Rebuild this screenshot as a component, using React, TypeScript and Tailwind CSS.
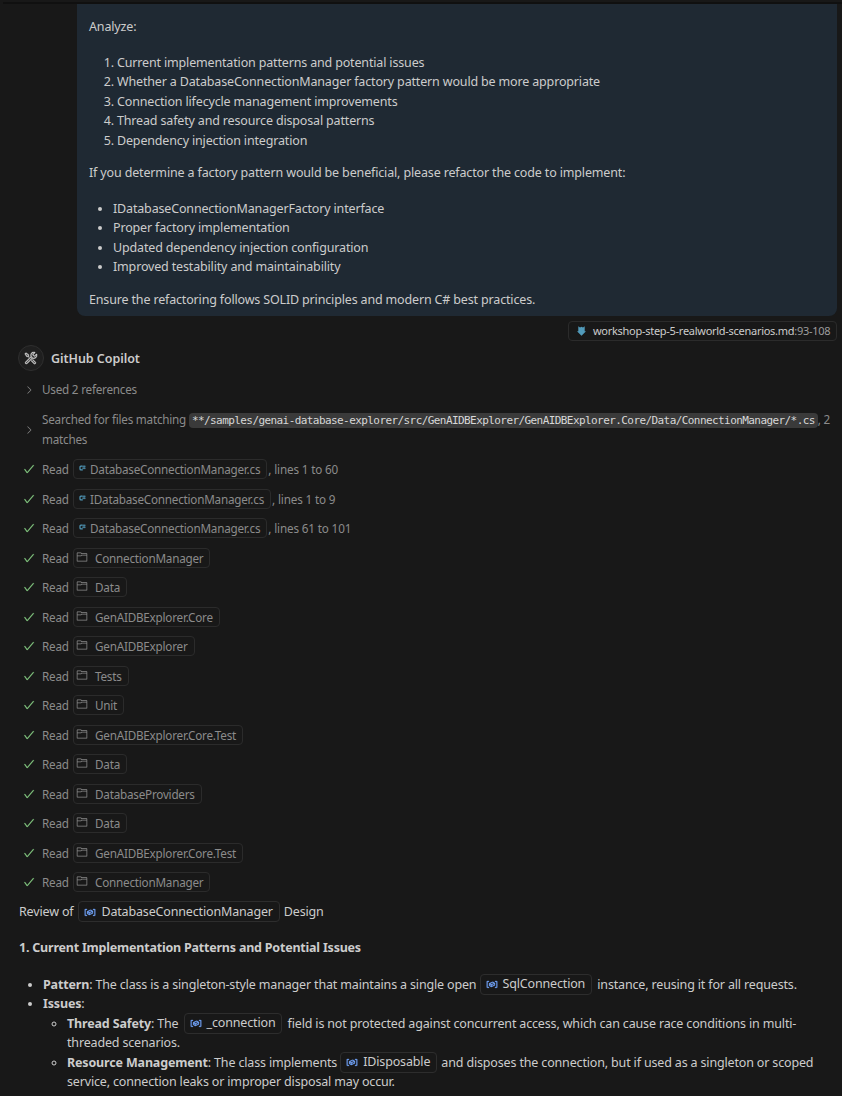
import React from "react";
import {
  VscTools,
  VscChevronRight,
  VscCheck,
  VscFolder,
  VscSymbolVariable,
} from "react-icons/vsc";

const analysisSteps = [
  "Current implementation patterns and potential issues",
  "Whether a DatabaseConnectionManager factory pattern would be more appropriate",
  "Connection lifecycle management improvements",
  "Thread safety and resource disposal patterns",
  "Dependency injection integration",
];

const factoryGoals = [
  "IDatabaseConnectionManagerFactory interface",
  "Proper factory implementation",
  "Updated dependency injection configuration",
  "Improved testability and maintainability",
];

const reads: { name: string; lines?: string }[] = [
  { name: "DatabaseConnectionManager.cs", lines: "lines 1 to 60" },
  { name: "IDatabaseConnectionManager.cs", lines: "lines 1 to 9" },
  { name: "DatabaseConnectionManager.cs", lines: "lines 61 to 101" },
  { name: "ConnectionManager" },
  { name: "Data" },
  { name: "GenAIDBExplorer.Core" },
  { name: "GenAIDBExplorer" },
  { name: "Tests" },
  { name: "Unit" },
  { name: "GenAIDBExplorer.Core.Test" },
  { name: "Data" },
  { name: "DatabaseProviders" },
  { name: "Data" },
  { name: "GenAIDBExplorer.Core.Test" },
  { name: "ConnectionManager" },
];

function CSharpIcon() {
  return (
    <svg viewBox="0 0 7 6" className="h-[6px] w-[7px] shrink-0" fill="none" stroke="#519aba">
      <path d="M3.4 1.2H1.9Q1 1.2 1 2.1v1.8q0 .9.9.9h1.9" strokeWidth="1.2" />
      <path d="M4.2.5v3.7M5.7.5v3.7M3.3 1.3h3.3M3.3 3.3h3.3" strokeWidth=".7" />
    </svg>
  );
}

function MarkdownIcon() {
  return (
    <svg viewBox="0 0 9 10" className="h-[10px] w-[9px] shrink-0" fill="#519aba">
      <path d="M1.3.2 3 1.6 4.5.8 6 1.6 7.7.2V5.3H9L4.5 9.8 0 5.3h1.3z" />
    </svg>
  );
}

function SymbolChip({ children, className = "mx-px mb-[-2px]" }: { children: string; className?: string }) {
  return (
    <span className={`-mt-1 inline-flex h-[21px] items-center rounded border border-[#2d2d2d] pl-[5px] pr-[6px] align-middle ${className}`}>
      <VscSymbolVariable className="mr-[5px] h-3 w-3 shrink-0 stroke-[#75a8ff] stroke-[0.4] text-[#75a8ff]" />
      <span>{children}</span>
    </span>
  );
}

function ReadRow({ name, lines }: { name: string; lines?: string }) {
  return (
    <div className="flex h-[29.5px] items-center">
      <VscCheck className="ml-[23px] mr-[7px] h-3 w-3 shrink-0 stroke-[#89d185] stroke-[0.5] text-[#89d185]" />
      <span className="w-[26px] pt-px">Read</span>
      <span className="ml-[5px] flex h-5 items-center rounded border border-[#2b2b2b] pr-[6px]">
        {lines ? (
          <span className="mb-[2px] ml-[5px] mr-1">
            <CSharpIcon />
          </span>
        ) : (
          <VscFolder className="mb-[2px] ml-[2px] mr-[7px] h-3 w-3" />
        )}
        <span className="pt-px">{name}</span>
      </span>
      {lines && <span className="ml-px pt-px tracking-[-0.15px]">, {lines}</span>}
    </div>
  );
}

export default function App() {
  return (
    <main className="h-[1096px] w-[842px] overflow-hidden whitespace-nowrap bg-[#181818] font-['Noto_Sans','Open_Sans',sans-serif] text-[12.5px] leading-[19.5px] tracking-[-0.16px] text-[#cccccc]">
      <div className="ml-[3px] h-1 border-b-2 border-[#101010]" />
      <section className="ml-[77px] h-[312px] w-[760px] rounded-b-lg bg-[#1f2933] px-3 pt-[13px]">
        <p>Analyze:</p>
        <ol className="mt-4 list-decimal pl-7">
          {analysisSteps.map((step) => (
            <li key={step}>{step}</li>
          ))}
        </ol>
        <p className="mt-[13px] tracking-[-0.15px]">If you determine a factory pattern would be beneficial, please refactor the code to implement:</p>
        <ul className="mt-4 list-disc pl-6">
          {factoryGoals.map((goal) => (
            <li key={goal}>{goal}</li>
          ))}
        </ul>
        <p className="mt-[13px]">Ensure the refactoring follows SOLID principles and modern C# best practices.</p>
      </section>

      <div className="mr-[5px] mt-[5px] flex justify-end">
        <div className="flex h-5 w-[269px] items-center rounded border border-[#2b2b2b] pl-[8px] text-[11px] tracking-[-0.28px]">
          <MarkdownIcon />
          <span className="ml-[7px]">workshop-step-5-realworld-scenarios.md</span>
          <span className="text-[#9d9d9d]">:93-108</span>
        </div>
      </div>

      <header className="ml-[18px] mt-1 flex h-[26px] items-center">
        <span className="flex h-[26px] w-[26px] items-center justify-center rounded-full border border-[#2e2e2e] bg-[#1f1f1f]">
          <VscTools className="h-[14px] w-[14px] stroke-[#cccccc] stroke-[0.4]" />
        </span>
        <h1 className="ml-[7px] pt-px font-semibold tracking-[-0.05px]">GitHub Copilot</h1>
      </header>

      <section className="text-[11.7px] tracking-[-0.22px] text-[#8b8b8b]">
        <div className="mt-[9px] flex h-5 items-center">
          <VscChevronRight className="ml-[23px] mr-[7px] h-3 w-3 shrink-0" />
          <span>Used 2 references</span>
        </div>
        <div className="mt-[10px] flex h-[39px] items-center">
          <VscChevronRight className="ml-[23px] mr-[7px] h-3 w-3 shrink-0" />
          <p>
            Searched for files matching{" "}
            <code className="rounded bg-[#3a3a3a] px-[3px] py-px font-['DejaVu_Sans_Mono',monospace] text-[11px] tracking-[-0.575px] text-[#d7d7d7]">
              **/samples/genai-database-explorer/src/GenAIDBExplorer/GenAIDBExplorer.Core/Data/ConnectionManager/*.cs
            </code>
            , 2<br />
            matches
          </p>
        </div>
        <div className="mt-[5.5px]">
          {reads.map((read, index) => (
            <ReadRow key={index} {...read} />
          ))}
        </div>
      </section>

      <article className="ml-[19px]">
        <div className="mt-[4px] flex h-[21px] items-center">
          <span>Review of</span>
          <SymbolChip className="-mb-1 ml-[5px] mr-1">DatabaseConnectionManager</SymbolChip>
          <span>Design</span>
        </div>
        <h2 className="mt-[16px] font-bold tracking-[-0.21px]">1. Current Implementation Patterns and Potential Issues</h2>
        <ul className="mt-[17px] list-disc pl-6">
          <li className="h-[19.5px]">
            <strong>Pattern</strong>: The class is a singleton-style manager that maintains a single open{" "}
            <SymbolChip className="relative -top-px -mb-1 mr-[2px]">SqlConnection</SymbolChip> instance, reusing it for all requests.
          </li>
          <li>
            <strong>Issues</strong>:
            <ul className="list-[circle] pl-6">
              <li className="h-[39px]">
                <strong>Thread Safety</strong>: The <SymbolChip className="relative -top-px -mb-1 ml-[2px] mr-[2px]">_connection</SymbolChip> field is not protected against concurrent access, which can cause race conditions in multi-
                <br />
                threaded scenarios.
              </li>
              <li className="h-[39px]">
                <strong>Resource Management</strong>: The class implements <SymbolChip className="relative -top-px -mb-1 mr-px">IDisposable</SymbolChip> and disposes the connection, but if used as a singleton or scoped
                <br />
                service, connection leaks or improper disposal may occur.
              </li>
            </ul>
          </li>
        </ul>
      </article>
    </main>
  );
}
